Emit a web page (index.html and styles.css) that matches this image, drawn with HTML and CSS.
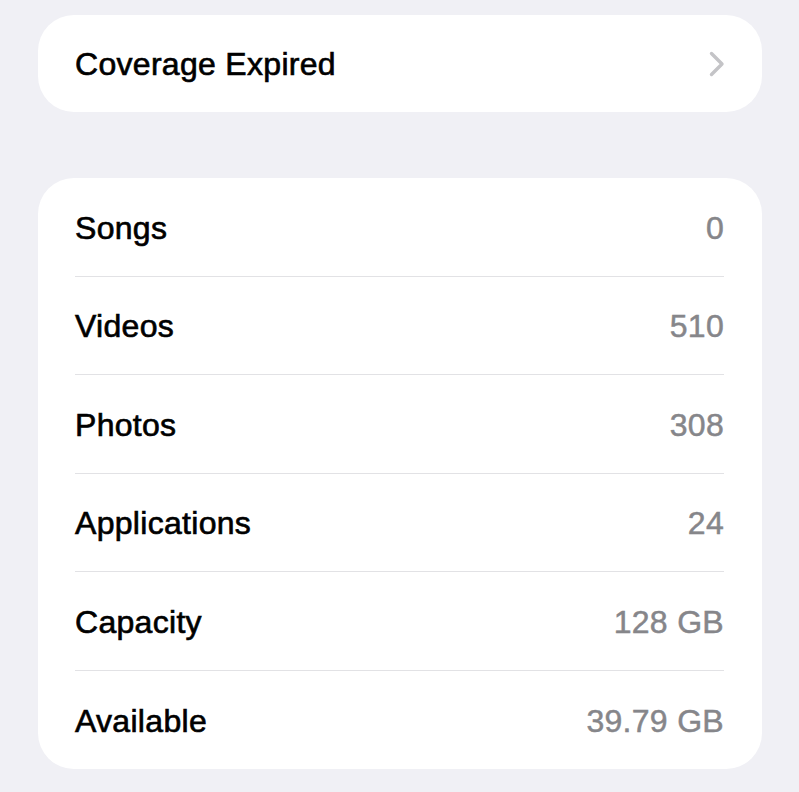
FILE: index.html
```html
<!DOCTYPE html>
<html lang="en">
<head>
<meta charset="utf-8">
<title>About</title>
<link rel="stylesheet" href="styles.css">
</head>
<body>
<main class="page">
  <section class="card card-link">
    <div class="row row-single">
      <span class="label">Coverage Expired</span>
      <svg class="chevron" width="16" height="26" viewBox="0 0 16 26" aria-hidden="true">
        <polyline points="2.5,2.5 13,13 2.5,23.5" fill="none" stroke="#c4c4c7" stroke-width="3.4" stroke-linecap="round" stroke-linejoin="round"/>
      </svg>
    </div>
  </section>
  <section class="card card-list">
    <div class="row"><span class="label">Songs</span><span class="value">0</span></div>
    <div class="row"><span class="label">Videos</span><span class="value">510</span></div>
    <div class="row"><span class="label">Photos</span><span class="value">308</span></div>
    <div class="row"><span class="label">Applications</span><span class="value">24</span></div>
    <div class="row"><span class="label">Capacity</span><span class="value">128 GB</span></div>
    <div class="row"><span class="label">Available</span><span class="value">39.79 GB</span></div>
  </section>
</main>
</body>
</html>
```

FILE: styles.css
```css
html, body {
  margin: 0;
  padding: 0;
  background: #f0f0f5;
}

body {
  font-family: "Liberation Sans", Arial, sans-serif;
  font-size: 32px;
  color: #000;
}

.page {
  padding: 15px 37px 0 38px;
  display: flex;
  flex-direction: column;
}

.card {
  background: #fff;
  border-radius: 36px;
  padding: 0 38px 0 37px;
}

.card-list {
  margin-top: 66px;
}

.row {
  display: flex;
  align-items: center;
  justify-content: space-between;
  box-sizing: border-box;
  height: 98.5px;
  padding-top: 3px;
  border-bottom: 1px solid #e2e2e5;
}

.row:last-child {
  border-bottom: none;
}

.row-single {
  height: 97px;
  padding-top: 2px;
  border-bottom: none;
}

.label {
  -webkit-text-stroke: 0.65px #000;
  letter-spacing: 0.3px;
}

.value {
  color: #86868a;
  -webkit-text-stroke: 0.5px #86868a;
  letter-spacing: 0.3px;
}

.chevron {
  display: block;
  margin-right: -1px;
  margin-top: -2px;
}
```
